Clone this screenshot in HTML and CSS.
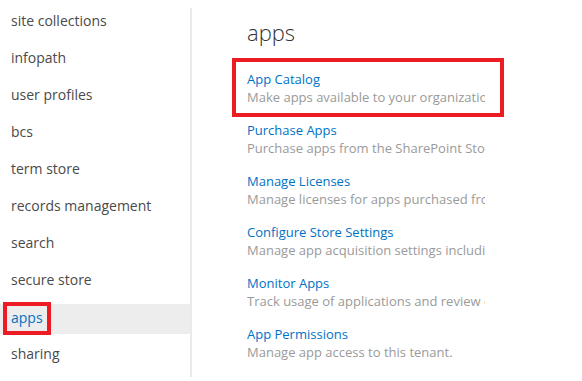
FILE: index.html
```html
<!DOCTYPE html>
<html lang="en">
<head>
  <meta charset="UTF-8">
  <title>apps - SharePoint admin center</title>
  <link rel="stylesheet" href="styles.css">
</head>
<body>
  <div class="page">
    <!-- left navigation -->
    <nav class="sidebar">
      <ul>
        <li><a href="#">site collections</a></li>
        <li><a href="#">infopath</a></li>
        <li><a href="#">user profiles</a></li>
        <li><a href="#">bcs</a></li>
        <li><a href="#">term store</a></li>
        <li><a href="#">records management</a></li>
        <li><a href="#">search</a></li>
        <li><a href="#">secure store</a></li>
        <li class="selected"><a href="#" class="marked">apps</a></li>
        <li><a href="#">sharing</a></li>
      </ul>
    </nav>
    <div class="divider"></div>

    <!-- main content -->
    <main class="content">
      <h1>apps</h1>
      <div class="item marked">
        <a href="#">App Catalog</a>
        <p>Make apps available to your organization and manage requests for apps.</p>
      </div>
      <div class="item">
        <a href="#">Purchase Apps</a>
        <p>Purchase apps from the SharePoint Store.</p>
      </div>
      <div class="item">
        <a href="#">Manage Licenses</a>
        <p>Manage licenses for apps purchased from the SharePoint Store.</p>
      </div>
      <div class="item">
        <a href="#">Configure Store Settings</a>
        <p>Manage app acquisition settings including whether end users can purchase apps.</p>
      </div>
      <div class="item">
        <a href="#">Monitor Apps</a>
        <p>Track usage of applications and review errors.</p>
      </div>
      <div class="item">
        <a href="#">App Permissions</a>
        <p>Manage app access to this tenant.</p>
      </div>
    </main>
  </div>
</body>
</html>
```

FILE: styles.css
```css
/* base */
body {
  margin: 0;
  font-family: "Segoe UI", "Open Sans", sans-serif;
  background-color: white;
}

.page {
  display: flex;
  height: 381px;
}

/* left navigation */
.sidebar {
  width: 190px;
}

.sidebar ul {
  list-style: none;
  margin: 8px 0 0 0;
  padding: 0;
  display: flex;
  flex-direction: column;
  gap: 7px;
}

.sidebar li {
  height: 30px;
}

.sidebar li a {
  display: inline-block;
  padding: 0 0 4px 11px;
  line-height: 26px;
  font-size: 14px;
  color: #4a4a4a;
  text-decoration: none;
}

.sidebar li.selected {
  background-color: #ededed;
}

.sidebar li.selected a {
  color: #0072c6;
}

/* red annotation box */
.sidebar li a.marked {
  margin: 2px 0 0 7px;
  padding: 0 4px 2px 4px;
  line-height: 23px;
  outline: 4px solid #ed1c24;
}

.divider {
  width: 2px;
  margin: 8px 0 4px 0;
  background-color: #eaeaea;
}

/* main content */
.content {
  padding-left: 44px;
}

.content h1 {
  margin: 17px 0 15px 11px;
  font-size: 22px;
  font-weight: 300;
  line-height: 30px;
  color: #333;
}

.item {
  width: 238px;
  padding: 8px 15px 7px 11px;
  font-size: 13px;
  line-height: 18px;
}

.item a {
  display: block;
  color: #0072c6;
  text-decoration: none;
  white-space: nowrap;
}

.item p {
  margin: 0;
  color: #9a9a9a;
  white-space: nowrap;
  overflow: hidden;
}

.item.marked {
  outline: 4px solid #ed1c24;
}
```
